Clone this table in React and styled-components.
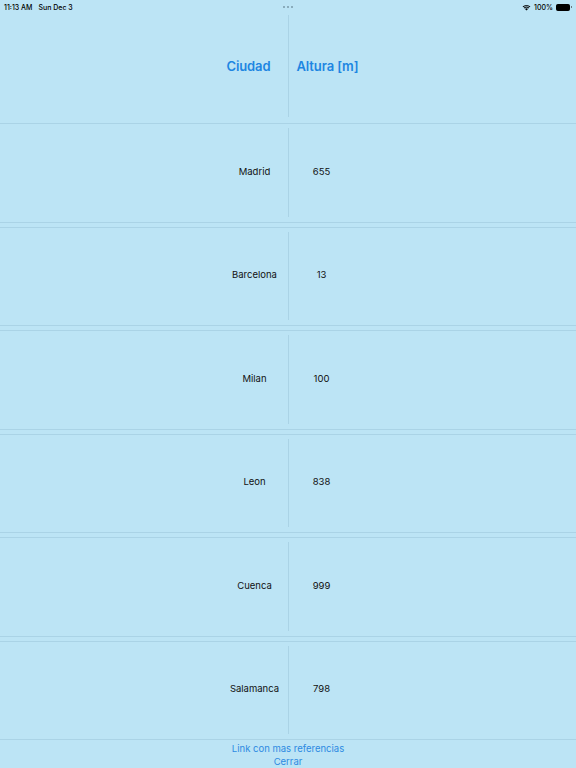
import React from 'react';
import styled, { createGlobalStyle } from 'styled-components';

const GlobalStyle = createGlobalStyle`
    html, body {
        margin: 0;
        padding: 0;
        background: #bce4f5;
    }
    body {
        font-family: Inter, "Liberation Sans", sans-serif;
        -webkit-font-smoothing: antialiased;
    }
`;

const LINE = '#aad3e6';

const Page = styled.div`
    width: 576px;
    height: 768px;
    background: #bce4f5;
    display: flex;
    flex-direction: column;
    overflow: hidden;
`;

const StatusBar = styled.div`
    height: 14px;
    flex-shrink: 0;
    display: grid;
    grid-template-columns: 1fr auto 1fr;
    align-items: center;
    padding: 0 4px;
    font-size: 7px;
    font-weight: 500;
    color: #000;
`;

const StatusLeft = styled.div`
    display: flex;
    gap: 6px;
`;

const Dots = styled.div`
    display: flex;
    gap: 2px;
    span {
        width: 2px;
        height: 2px;
        border-radius: 50%;
        background: #7a9aa8;
    }
`;

const StatusRight = styled.div`
    display: flex;
    justify-content: flex-end;
    align-items: center;
    gap: 3px;
`;

const Battery = styled.div`
    display: flex;
    align-items: center;
    gap: 1px;
    &::before {
        content: '';
        width: 12px;
        height: 5px;
        border-radius: 1.5px;
        background: #000;
        border: 0.5px solid #000;
    }
    &::after {
        content: '';
        width: 1px;
        height: 2px;
        background: #555;
        border-radius: 0 1px 1px 0;
    }
`;

const Grid = styled.div`
    display: grid;
    grid-template-columns: 1fr 1px 1fr;
    height: ${({ h }) => h}px;
    box-sizing: border-box;
    flex-shrink: 0;
    ${({ bordered }) => bordered && `
        border-top: 1px solid ${LINE};
        border-bottom: 1px solid ${LINE};
    `}
    margin-top: ${({ gap }) => gap || 0}px;
`;

const VLine = styled.div`
    background: ${LINE};
    margin: ${({ top }) => top}px 0 ${({ bottom }) => bottom}px;
`;

const Cell = styled.div`
    display: flex;
    align-items: center;
    justify-content: ${({ side }) => side === 'left' ? 'flex-end' : 'flex-start'};
    padding-bottom: ${({ lift }) => lift || 0}px;
`;

const HeaderLabel = styled.span`
    font-size: 13px;
    font-weight: 600;
    color: #1e86e2;
    letter-spacing: -0.1px;
    ${({ side }) => side === 'left' ? 'margin-right: 17px;' : 'margin-left: 8px;'}
    margin-bottom: 5px;
`;

const ValueLabel = styled.span`
    width: 66px;
    text-align: center;
    font-size: 9.5px;
    color: #111;
`;

const Footer = styled.div`
    flex: 1;
    display: flex;
    flex-direction: column;
    align-items: center;
    justify-content: center;
    font-size: 9.5px;
    line-height: 13px;
    color: #2c8ae2;
    padding-top: 2px;
`;

const rows = [
    { city: 'Madrid', height: 655 },
    { city: 'Barcelona', height: 13 },
    { city: 'Milan', height: 100 },
    { city: 'Leon', height: 838 },
    { city: 'Cuenca', height: 999 },
    { city: 'Salamanca', height: 798 },
];

const Wifi = () => (
    <svg width="9" height="7" viewBox="0 0 18 13">
        <path d="M9 12.5 L6 9.3 A4.4 4.4 0 0 1 12 9.3 Z" fill="#000" />
        <path d="M3.6 6.9 A7.8 7.8 0 0 1 14.4 6.9 L13 8.4 A5.8 5.8 0 0 0 5 8.4 Z" fill="#000" />
        <path d="M1.2 4.4 A11.3 11.3 0 0 1 16.8 4.4 L15.4 5.9 A9.3 9.3 0 0 0 2.6 5.9 Z" fill="#000" />
    </svg>
);

const App = () => (
    <Page>
        <GlobalStyle />
        <StatusBar>
            <StatusLeft>
                <span>11:13 AM</span>
                <span>Sun Dec 3</span>
            </StatusLeft>
            <Dots><span /><span /><span /></Dots>
            <StatusRight>
                <Wifi />
                <span>100%</span>
                <Battery />
            </StatusRight>
        </StatusBar>
        <Grid h={109}>
            <Cell side="left"><HeaderLabel side="left">Ciudad</HeaderLabel></Cell>
            <VLine top={1} bottom={6} />
            <Cell side="right"><HeaderLabel side="right">Altura [m]</HeaderLabel></Cell>
        </Grid>
        {rows.map((r, i) => (
            <Grid key={r.city} h={99.5} bordered gap={i === 0 ? 0 : 4}>
                <Cell side="left" lift={3}><ValueLabel>{r.city}</ValueLabel></Cell>
                <VLine top={4} bottom={5} />
                <Cell side="right" lift={3}><ValueLabel>{r.height}</ValueLabel></Cell>
            </Grid>
        ))}
        <Footer>
            <span>Link con mas referencias</span>
            <span>Cerrar</span>
        </Footer>
    </Page>
);

export default App;
